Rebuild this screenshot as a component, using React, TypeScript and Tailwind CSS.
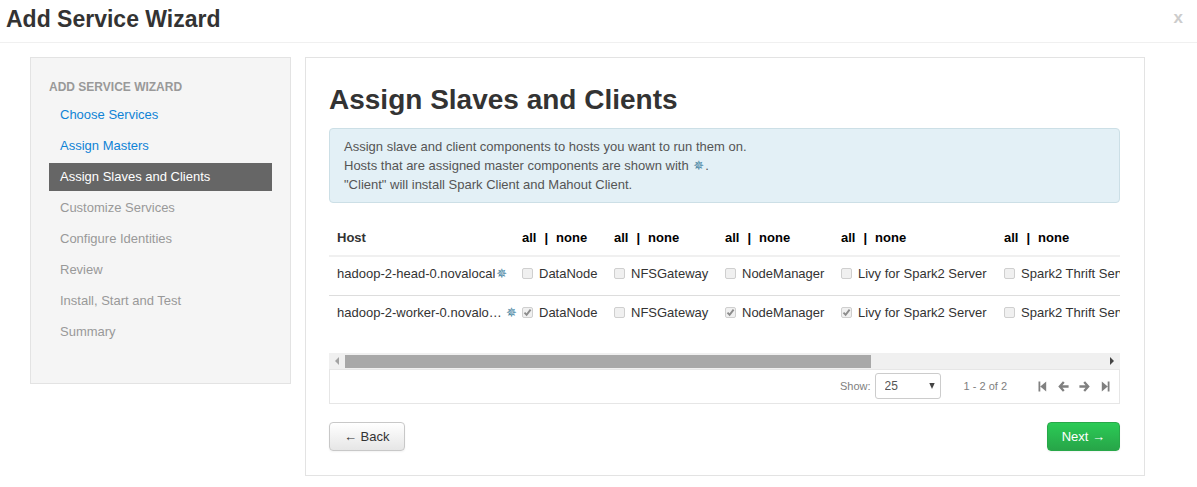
import { useState } from "react";

const STEPS = [
  "Choose Services",
  "Assign Masters",
  "Assign Slaves and Clients",
  "Customize Services",
  "Configure Identities",
  "Review",
  "Install, Start and Test",
  "Summary",
];
const CURRENT = 2;

const COMPONENTS = [
  "DataNode",
  "NFSGateway",
  "NodeManager",
  "Livy for Spark2 Server",
  "Spark2 Thrift Server",
];

const HOSTS = [
  { name: "hadoop-2-head-0.novalocal", checked: [false, false, false, false, false] },
  { name: "hadoop-2-worker-0.novalocal", checked: [true, false, true, true, false] },
];

function MasterMark() {
  return <span className="shrink-0 px-px font-['DejaVu_Sans'] text-[13px] leading-none text-[#4a86a3]">✵</span>;
}

function Check({ id, on }: { id: string; on: boolean }) {
  return (
    <span className="grid size-[11px] shrink-0">
      <input
        id={id}
        type="checkbox"
        disabled
        defaultChecked={on}
        className="col-start-1 row-start-1 size-[11px] appearance-none rounded-[2px] border border-[#cfcfcf] bg-[#f0f0f0]"
      />
      {on && (
        <svg viewBox="0 0 11 11" className="pointer-events-none col-start-1 row-start-1 size-[11px]" aria-hidden="true">
          <path d="M2.5 5.6 4.6 7.8 8.6 2.6" fill="none" stroke="#8c8c8c" strokeWidth="1.9" />
        </svg>
      )}
    </span>
  );
}

function PagerButton({ label, children }: { label: string; children: React.ReactNode }) {
  return (
    <button type="button" aria-label={label} className="flex size-[11px] items-center justify-center text-[#808080]">
      {children}
    </button>
  );
}

const ARROW = "M5.8 1 1.8 5.5l4 4.5M2 5.5H10.6";
const STEP = "M1.5 .6h1.8v9.8H1.5zM9.2 .6v9.8L3.3 5.5z";

export default function App() {
  const [pageSize, setPageSize] = useState("25");
  return (
    <div className="bg-white font-['Liberation_Sans',Arial,sans-serif] text-[13px] text-[#333]">
      <header className="flex h-[43px] items-start justify-between border-b border-[#f0f0f0] pl-[6px] pr-[14px]">
        <h1 className="pt-[5px] text-[23px] leading-[28px] font-bold">Add Service Wizard</h1>
        <button type="button" className="pt-[8px] text-[17px] leading-[20px] font-bold text-[#ccc]">
          x
        </button>
      </header>

      <div className="flex items-start gap-[14px] pt-[14px] pr-[52px] pb-[11px] pl-[30px]">
        <nav className="w-[261px] shrink-0 border border-[#e3e3e3] bg-[#f5f5f5] px-[18px] pt-[19px] pb-[37px]">
          <h2 className="h-[24px] text-[12px] leading-[20px] font-bold text-[#999]">ADD SERVICE WIZARD</h2>
          <ul className="flex flex-col gap-[3px]">
            {STEPS.map((step, i) => (
              <li key={step}>
                {i < CURRENT ? (
                  <a href="#" className="block px-[11px] text-[13px] leading-[28px] text-[#0f83d6]">
                    {step}
                  </a>
                ) : i === CURRENT ? (
                  <a href="#" aria-current="step" className="block bg-[#666] px-[11px] text-[13px] leading-[28px] text-white">
                    {step}
                  </a>
                ) : (
                  <span className="block px-[11px] text-[13px] leading-[28px] text-[#999]">{step}</span>
                )}
              </li>
            ))}
          </ul>
        </nav>

        <main className="min-w-0 flex-1 border border-[#e3e3e3] pt-[23px] pr-[24px] pb-[24px] pl-[23px]">
          <h2 className="text-[28px] leading-[38px] font-bold">Assign Slaves and Clients</h2>

          <div className="mt-[9px] rounded-[4px] border border-[#ccdfe6] bg-[#e3f0f6] px-[14px] py-[8px] text-[13px] leading-[19px] text-[#555]">
            <p>Assign slave and client components to hosts you want to run them on.</p>
            <p>
              Hosts that are assigned master components are shown with <MasterMark />.
            </p>
            <p>"Client" will install Spark Client and Mahout Client.</p>
          </div>

          <div className="mt-[17px] overflow-hidden">
            <table className="w-[960px] table-fixed text-left text-[13px] leading-[19px]">
              <colgroup>
                <col className="w-[185px]" />
                <col className="w-[92px]" />
                <col className="w-[111px]" />
                <col className="w-[116px]" />
                <col className="w-[163px]" />
                <col />
              </colgroup>
              <thead>
                <tr className="h-[36px] border-b-2 border-[#f0f0f0]">
                  <th className="pl-[8px]">Host</th>
                  {COMPONENTS.map((c) => (
                    <th key={c} className="pl-[8px] whitespace-nowrap text-black">
                      <span className="flex gap-[8px]">
                        <button type="button" className="font-bold">all</button>
                        <span>|</span>
                        <button type="button" className="font-bold">none</button>
                      </span>
                    </th>
                  ))}
                </tr>
              </thead>
              <tbody>
                {HOSTS.map((host, r) => (
                  <tr key={host.name} className="h-[39px] border-b border-[#ddd] last:border-b-0">
                    <td className="pb-[4px] pl-[8px]">
                      <span className="flex items-center">
                        <span className="max-w-[168px] shrink-0 truncate">{host.name}</span>
                        <MasterMark />
                      </span>
                    </td>
                    {COMPONENTS.map((c, i) => (
                      <td key={c} className="pb-[4px] pl-[8px] whitespace-nowrap">
                        <span className="flex items-center gap-[6px]">
                          <Check id={`c-${r}-${i}`} on={host.checked[i]} />
                          <label htmlFor={`c-${r}-${i}`}>{c}</label>
                        </span>
                      </td>
                    ))}
                  </tr>
                ))}
              </tbody>
            </table>
          </div>

          <div className="mt-[19px] flex h-[16px] items-center bg-[#f0f0f0]">
            <button type="button" aria-label="Scroll left" className="flex w-[16px] shrink-0 justify-center">
              <svg viewBox="0 0 4 8" className="h-[8px] w-[4px]" fill="#a3a3a3"><path d="M4 0v8L0 4z" /></svg>
            </button>
            <div className="flex-1">
              <div className="h-[13px] w-[69.3%] bg-[#a8a8a8]" />
            </div>
            <button type="button" aria-label="Scroll right" className="flex w-[16px] shrink-0 justify-center">
              <svg viewBox="0 0 4 8" className="h-[8px] w-[4px]" fill="#444"><path d="M0 0v8l4-4z" /></svg>
            </button>
          </div>

          <div className="flex h-[35px] items-center justify-end border border-[#e6e6e6] pr-[8px] pb-px text-[11px] text-[#808080]">
            <label htmlFor="page-size" className="mr-[4px]">Show:</label>
            <span className="grid items-center">
              <select
                id="page-size"
                value={pageSize}
                onChange={(e) => setPageSize(e.target.value)}
                className="col-start-1 row-start-1 h-[26px] w-[66px] appearance-none rounded-[3px] border border-[#ccc] bg-white px-[9px] text-[12px] text-[#555]"
              >
                <option>10</option>
                <option>25</option>
                <option>50</option>
              </select>
              <svg viewBox="0 0 6 6" className="pointer-events-none col-start-1 row-start-1 mr-[6px] size-[6px] justify-self-end" fill="#444">
                <path d="M0.3 0h5.4L3 6z" />
              </svg>
            </span>
            <span className="mr-[30px] ml-[23px]">1 - 2 of 2</span>
            <span className="flex gap-[10px]">
              <PagerButton label="First page">
                <svg viewBox="0 0 11 11" className="size-[11px]" fill="currentColor"><path d={STEP} /></svg>
              </PagerButton>
              <PagerButton label="Previous page">
                <svg viewBox="0 0 11 11" className="size-[11px]" fill="none" stroke="currentColor" strokeWidth="2.3"><path d={ARROW} /></svg>
              </PagerButton>
              <PagerButton label="Next page">
                <svg viewBox="0 0 11 11" className="size-[11px] rotate-180" fill="none" stroke="currentColor" strokeWidth="2.3"><path d={ARROW} /></svg>
              </PagerButton>
              <PagerButton label="Last page">
                <svg viewBox="0 0 11 11" className="size-[11px] rotate-180" fill="currentColor"><path d={STEP} /></svg>
              </PagerButton>
            </span>
          </div>

          <div className="mt-[18px] flex justify-between text-[13px]">
            <button type="button" className="h-[29px] rounded-[4px] border border-[#c8c8c8] bg-linear-to-b from-white to-[#e6e6e6] px-[14px] text-[#333] shadow-xs">
              ← Back
            </button>
            <button type="button" className="h-[29px] rounded-[4px] border border-[#28a849] bg-linear-to-b from-[#2bcb56] to-[#27a548] px-[14px] text-white shadow-xs">
              Next →
            </button>
          </div>
        </main>
      </div>
    </div>
  );
}
